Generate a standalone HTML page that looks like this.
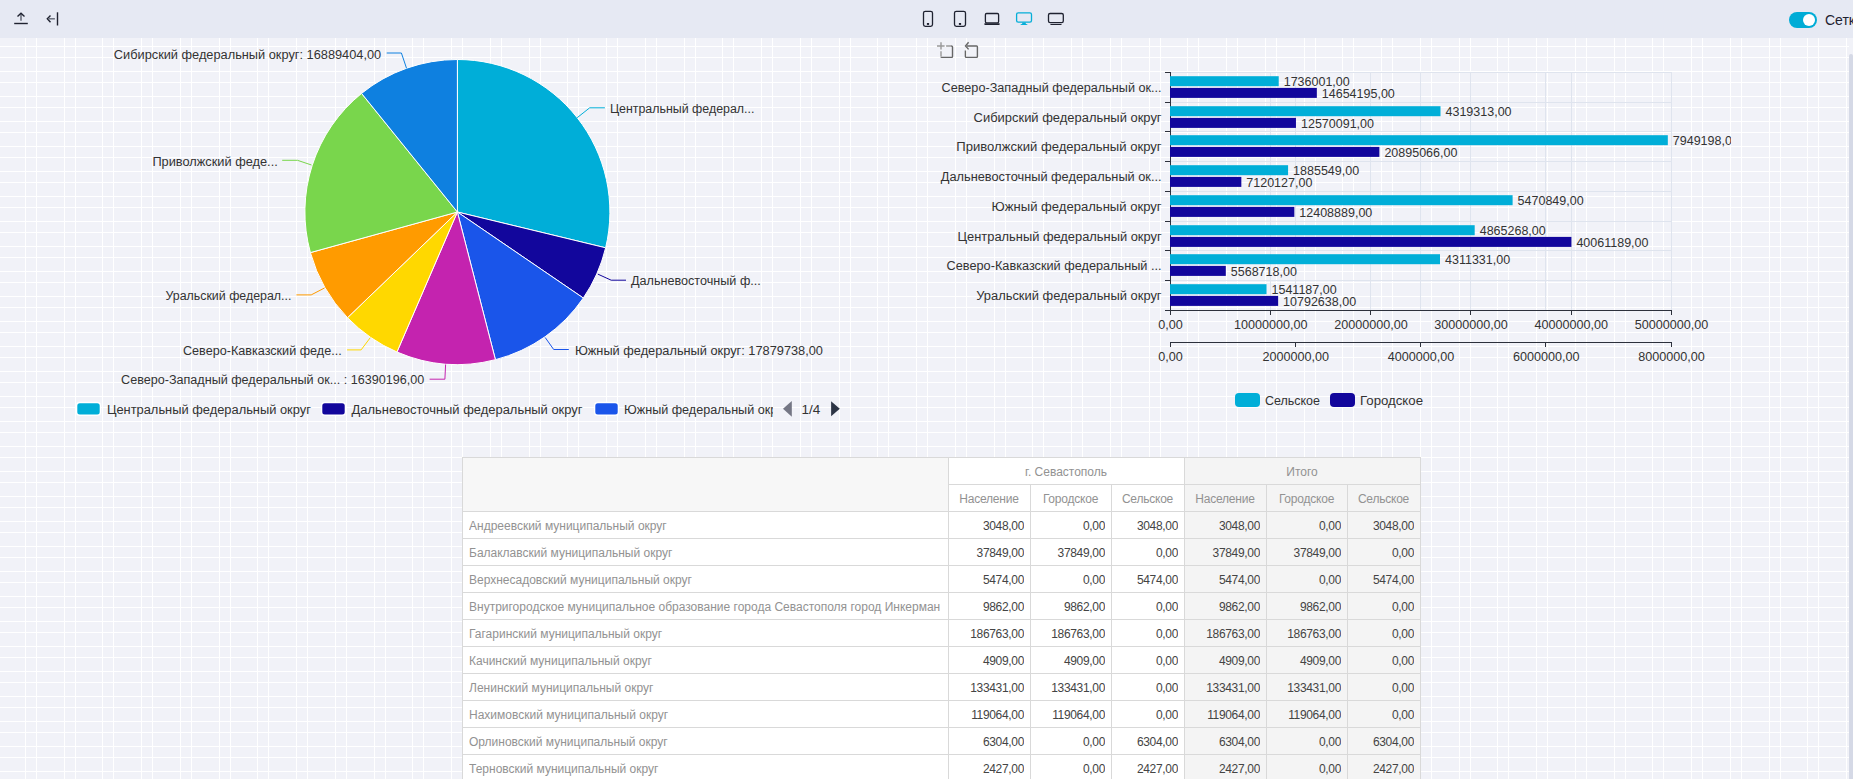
<!DOCTYPE html>
<html><head><meta charset="utf-8"><style>
html,body{margin:0;padding:0;}
body{width:1853px;height:779px;overflow:hidden;position:relative;background:#f1f2f8;font-family:'Liberation Sans', sans-serif;}
.abs{position:absolute;}
.cell{font-size:12px;white-space:nowrap;overflow:hidden;box-sizing:border-box;}
</style></head><body>
<svg class="abs" width="1853" height="779" style="left:0;top:0"><g fill="#ffffff"><rect x="25" y="38" width="1" height="741"/><rect x="36" y="38" width="1" height="741"/><rect x="64" y="38" width="1" height="741"/><rect x="75" y="38" width="1" height="741"/><rect x="102" y="38" width="1" height="741"/><rect x="113" y="38" width="1" height="741"/><rect x="141" y="38" width="1" height="741"/><rect x="152" y="38" width="1" height="741"/><rect x="180" y="38" width="1" height="741"/><rect x="191" y="38" width="1" height="741"/><rect x="219" y="38" width="1" height="741"/><rect x="230" y="38" width="1" height="741"/><rect x="257" y="38" width="1" height="741"/><rect x="268" y="38" width="1" height="741"/><rect x="296" y="38" width="1" height="741"/><rect x="307" y="38" width="1" height="741"/><rect x="335" y="38" width="1" height="741"/><rect x="346" y="38" width="1" height="741"/><rect x="374" y="38" width="1" height="741"/><rect x="385" y="38" width="1" height="741"/><rect x="412" y="38" width="1" height="741"/><rect x="423" y="38" width="1" height="741"/><rect x="451" y="38" width="1" height="741"/><rect x="462" y="38" width="1" height="741"/><rect x="490" y="38" width="1" height="741"/><rect x="501" y="38" width="1" height="741"/><rect x="529" y="38" width="1" height="741"/><rect x="540" y="38" width="1" height="741"/><rect x="567" y="38" width="1" height="741"/><rect x="578" y="38" width="1" height="741"/><rect x="606" y="38" width="1" height="741"/><rect x="617" y="38" width="1" height="741"/><rect x="645" y="38" width="1" height="741"/><rect x="656" y="38" width="1" height="741"/><rect x="684" y="38" width="1" height="741"/><rect x="695" y="38" width="1" height="741"/><rect x="722" y="38" width="1" height="741"/><rect x="733" y="38" width="1" height="741"/><rect x="761" y="38" width="1" height="741"/><rect x="772" y="38" width="1" height="741"/><rect x="800" y="38" width="1" height="741"/><rect x="811" y="38" width="1" height="741"/><rect x="839" y="38" width="1" height="741"/><rect x="850" y="38" width="1" height="741"/><rect x="877" y="38" width="1" height="741"/><rect x="888" y="38" width="1" height="741"/><rect x="916" y="38" width="1" height="741"/><rect x="927" y="38" width="1" height="741"/><rect x="955" y="38" width="1" height="741"/><rect x="966" y="38" width="1" height="741"/><rect x="994" y="38" width="1" height="741"/><rect x="1005" y="38" width="1" height="741"/><rect x="1032" y="38" width="1" height="741"/><rect x="1043" y="38" width="1" height="741"/><rect x="1071" y="38" width="1" height="741"/><rect x="1082" y="38" width="1" height="741"/><rect x="1110" y="38" width="1" height="741"/><rect x="1121" y="38" width="1" height="741"/><rect x="1149" y="38" width="1" height="741"/><rect x="1160" y="38" width="1" height="741"/><rect x="1187" y="38" width="1" height="741"/><rect x="1198" y="38" width="1" height="741"/><rect x="1226" y="38" width="1" height="741"/><rect x="1237" y="38" width="1" height="741"/><rect x="1265" y="38" width="1" height="741"/><rect x="1276" y="38" width="1" height="741"/><rect x="1304" y="38" width="1" height="741"/><rect x="1315" y="38" width="1" height="741"/><rect x="1342" y="38" width="1" height="741"/><rect x="1353" y="38" width="1" height="741"/><rect x="1381" y="38" width="1" height="741"/><rect x="1392" y="38" width="1" height="741"/><rect x="1420" y="38" width="1" height="741"/><rect x="1431" y="38" width="1" height="741"/><rect x="1459" y="38" width="1" height="741"/><rect x="1470" y="38" width="1" height="741"/><rect x="1497" y="38" width="1" height="741"/><rect x="1508" y="38" width="1" height="741"/><rect x="1536" y="38" width="1" height="741"/><rect x="1547" y="38" width="1" height="741"/><rect x="1575" y="38" width="1" height="741"/><rect x="1586" y="38" width="1" height="741"/><rect x="1614" y="38" width="1" height="741"/><rect x="1625" y="38" width="1" height="741"/><rect x="1652" y="38" width="1" height="741"/><rect x="1663" y="38" width="1" height="741"/><rect x="1691" y="38" width="1" height="741"/><rect x="1702" y="38" width="1" height="741"/><rect x="1730" y="38" width="1" height="741"/><rect x="1741" y="38" width="1" height="741"/><rect x="1769" y="38" width="1" height="741"/><rect x="1780" y="38" width="1" height="741"/><rect x="1807" y="38" width="1" height="741"/><rect x="1818" y="38" width="1" height="741"/><rect x="1846" y="38" width="1" height="741"/><rect x="0" y="46" width="1849" height="1"/><rect x="0" y="71" width="1849" height="1"/><rect x="0" y="96" width="1849" height="1"/><rect x="0" y="121" width="1849" height="1"/><rect x="0" y="146" width="1849" height="1"/><rect x="0" y="171" width="1849" height="1"/><rect x="0" y="196" width="1849" height="1"/><rect x="0" y="221" width="1849" height="1"/><rect x="0" y="246" width="1849" height="1"/><rect x="0" y="271" width="1849" height="1"/><rect x="0" y="296" width="1849" height="1"/><rect x="0" y="321" width="1849" height="1"/><rect x="0" y="346" width="1849" height="1"/><rect x="0" y="371" width="1849" height="1"/><rect x="0" y="396" width="1849" height="1"/><rect x="0" y="421" width="1849" height="1"/><rect x="0" y="446" width="1849" height="1"/><rect x="0" y="471" width="1849" height="1"/><rect x="0" y="496" width="1849" height="1"/><rect x="0" y="521" width="1849" height="1"/><rect x="0" y="546" width="1849" height="1"/><rect x="0" y="571" width="1849" height="1"/><rect x="0" y="596" width="1849" height="1"/><rect x="0" y="621" width="1849" height="1"/><rect x="0" y="646" width="1849" height="1"/><rect x="0" y="671" width="1849" height="1"/><rect x="0" y="696" width="1849" height="1"/><rect x="0" y="721" width="1849" height="1"/><rect x="0" y="746" width="1849" height="1"/><rect x="0" y="771" width="1849" height="1"/><rect x="0" y="57" width="1849" height="1"/><rect x="0" y="82" width="1849" height="1"/><rect x="0" y="107" width="1849" height="1"/><rect x="0" y="132" width="1849" height="1"/><rect x="0" y="157" width="1849" height="1"/><rect x="0" y="182" width="1849" height="1"/><rect x="0" y="207" width="1849" height="1"/><rect x="0" y="232" width="1849" height="1"/><rect x="0" y="257" width="1849" height="1"/><rect x="0" y="282" width="1849" height="1"/><rect x="0" y="307" width="1849" height="1"/><rect x="0" y="332" width="1849" height="1"/><rect x="0" y="357" width="1849" height="1"/><rect x="0" y="382" width="1849" height="1"/><rect x="0" y="407" width="1849" height="1"/><rect x="0" y="432" width="1849" height="1"/><rect x="0" y="457" width="1849" height="1"/><rect x="0" y="482" width="1849" height="1"/><rect x="0" y="507" width="1849" height="1"/><rect x="0" y="532" width="1849" height="1"/><rect x="0" y="557" width="1849" height="1"/><rect x="0" y="582" width="1849" height="1"/><rect x="0" y="607" width="1849" height="1"/><rect x="0" y="632" width="1849" height="1"/><rect x="0" y="657" width="1849" height="1"/><rect x="0" y="682" width="1849" height="1"/><rect x="0" y="707" width="1849" height="1"/><rect x="0" y="732" width="1849" height="1"/><rect x="0" y="757" width="1849" height="1"/></g></svg>
<div class="abs" style="left:0;top:0;width:1853px;height:38px;background:#e6e9f3"></div><svg class="abs" width="1853" height="38" style="left:0;top:0" fill="none" stroke="#1f2230"><path d="M14.2,23.5 H27.8" stroke-width="1.4"/><path d="M21,13.5 V20.7" stroke-width="1.6" stroke="#6b6f7c"/><path d="M17.5,16.5 L21,13.2 L24.5,16.5" stroke-width="1.4"/><path d="M57.5,12.3 V25.5" stroke-width="1.4"/><path d="M50.5,15.5 L47.3,18.8 L50.5,22.2" stroke-width="1.4"/><path d="M48.5,18.8 H54.9" stroke-width="1.5" stroke="#6b6f7c"/><rect x="923.5" y="11.3" width="9" height="15" rx="1.8" stroke-width="1.3"/><rect x="926.9" y="23" width="2.2" height="1.9" fill="#1f2230" stroke="none"/><rect x="954.5" y="11.3" width="11" height="15" rx="1.8" stroke-width="1.3"/><rect x="958.9" y="23" width="2.2" height="1.9" fill="#1f2230" stroke="none"/><rect x="985.4" y="13.5" width="13.2" height="9.3" rx="1.2" stroke-width="1.3"/><rect x="984.2" y="23.3" width="15.6" height="1.6" rx="0.8" fill="#1f2230" stroke="none"/><rect x="1016.6" y="12.8" width="14.9" height="9.3" rx="1.6" stroke="#05aed8" stroke-width="1.3"/><path d="M1022.2,22.4 H1025.8 V23.9 L1027.2,24.2 Q1027.9,25.1 1027,25.1 H1021 Q1020.1,25.1 1020.8,24.2 L1022.2,23.9 Z" fill="#05aed8" stroke="none"/><rect x="1048.5" y="13.5" width="14.8" height="9.2" rx="1.6" stroke-width="1.3"/><rect x="1050.3" y="24" width="11.3" height="1.1" rx="0.5" fill="#1f2230" stroke="none"/></svg><div class="abs" style="left:1789px;top:12px;width:28px;height:16px;border-radius:8px;background:#00acd6"></div><div class="abs" style="left:1802.5px;top:13.7px;width:12.6px;height:12.6px;border-radius:50%;background:#fff"></div><div class="abs" style="left:1825px;top:11px;height:18px;line-height:18px;font-size:14px;color:#1f2230;white-space:nowrap">Сетка</div>
<svg class="abs" width="1853" height="779" style="left:0;top:0;font-family:'Liberation Sans', sans-serif;font-size:12px" fill="#333333"><path d="M457.4,212.0 L457.40,59.50 A152.5,152.5 0 0 1 605.64,247.80 Z" fill="#00aed8" stroke="#fff" stroke-width="1" stroke-linejoin="round"/><path d="M457.4,212.0 L605.64,247.80 A152.5,152.5 0 0 1 583.32,298.02 Z" fill="#12069c" stroke="#fff" stroke-width="1" stroke-linejoin="round"/><path d="M457.4,212.0 L583.32,298.02 A152.5,152.5 0 0 1 495.43,359.68 Z" fill="#1a55ea" stroke="#fff" stroke-width="1" stroke-linejoin="round"/><path d="M457.4,212.0 L495.43,359.68 A152.5,152.5 0 0 1 396.96,352.01 Z" fill="#c423af" stroke="#fff" stroke-width="1" stroke-linejoin="round"/><path d="M457.4,212.0 L396.96,352.01 A152.5,152.5 0 0 1 347.47,317.69 Z" fill="#ffd800" stroke="#fff" stroke-width="1" stroke-linejoin="round"/><path d="M457.4,212.0 L347.47,317.69 A152.5,152.5 0 0 1 310.40,252.60 Z" fill="#ff9b00" stroke="#fff" stroke-width="1" stroke-linejoin="round"/><path d="M457.4,212.0 L310.40,252.60 A152.5,152.5 0 0 1 361.56,93.38 Z" fill="#79d64c" stroke="#fff" stroke-width="1" stroke-linejoin="round"/><path d="M457.4,212.0 L361.56,93.38 A152.5,152.5 0 0 1 457.40,59.50 Z" fill="#0e80e0" stroke="#fff" stroke-width="1" stroke-linejoin="round"/><polyline points="406.5,68.2 401.4,53 386.7,53" fill="none" stroke="#0e80e0" stroke-width="1"/><text x="381.2" y="54.5" text-anchor="end" dominant-baseline="central" textLength="267.4" lengthAdjust="spacingAndGlyphs">Сибирский федеральный округ: 16889404,00</text><polyline points="577.2,117.7 589.7,107.8 604.9,107.8" fill="none" stroke="#00aed8" stroke-width="1"/><text x="609.9" y="108.5" text-anchor="start" dominant-baseline="central" textLength="144.5" lengthAdjust="spacingAndGlyphs">Центральный федерал...</text><polyline points="597.8,274.1 611.2,280.2 626,280.2" fill="none" stroke="#12069c" stroke-width="1"/><text x="631" y="281" text-anchor="start" dominant-baseline="central" textLength="129.8" lengthAdjust="spacingAndGlyphs">Дальневосточный ф...</text><polyline points="545.2,337.5 553.7,349.5 568.8,349.5" fill="none" stroke="#1a55ea" stroke-width="1"/><text x="574.9" y="350.5" text-anchor="start" dominant-baseline="central" textLength="248.1" lengthAdjust="spacingAndGlyphs">Южный федеральный округ: 17879738,00</text><polyline points="445.6,364.5 444.9,379.2 429.6,379.2" fill="none" stroke="#c423af" stroke-width="1"/><text x="424.2" y="379.5" text-anchor="end" dominant-baseline="central" textLength="303.1" lengthAdjust="spacingAndGlyphs">Северо-Западный федеральный ок... : 16390196,00</text><polyline points="370.2,337.8 361.1,349.9 347.1,349.9" fill="none" stroke="#ffd800" stroke-width="1"/><text x="341.7" y="350.5" text-anchor="end" dominant-baseline="central" textLength="158.7" lengthAdjust="spacingAndGlyphs">Северо-Кавказский феде...</text><polyline points="324.5,288 311.2,294.9 296.4,294.9" fill="none" stroke="#ff9b00" stroke-width="1"/><text x="291.4" y="295.5" text-anchor="end" dominant-baseline="central" textLength="125.9" lengthAdjust="spacingAndGlyphs">Уральский федерал...</text><polyline points="311.5,165 297.5,160.3 282.2,160.3" fill="none" stroke="#79d64c" stroke-width="1"/><text x="277.8" y="162" text-anchor="end" dominant-baseline="central" textLength="125.4" lengthAdjust="spacingAndGlyphs">Приволжский феде...</text><rect x="76.6" y="402.5" width="23.8" height="12.8" rx="3.2" fill="#00aed8" stroke="#fff" stroke-width="1.4"/><rect x="321.6" y="402.5" width="23.8" height="12.8" rx="3.2" fill="#12069c" stroke="#fff" stroke-width="1.4"/><rect x="594.6" y="402.5" width="23.8" height="12.8" rx="3.2" fill="#1a55ea" stroke="#fff" stroke-width="1.4"/><defs><clipPath id="lc"><rect x="0" y="390" width="773" height="40"/></clipPath></defs><g clip-path="url(#lc)"><text x="106.9" y="409.5" dominant-baseline="central" textLength="204" lengthAdjust="spacingAndGlyphs">Центральный федеральный округ</text><text x="351.5" y="409.5" dominant-baseline="central" textLength="231" lengthAdjust="spacingAndGlyphs">Дальневосточный федеральный округ</text><text x="624" y="409.5" dominant-baseline="central" textLength="164" lengthAdjust="spacingAndGlyphs">Южный федеральный округ</text></g><path d="M791.8,401 L783,408.8 L791.8,416.8 Z" fill="#747684"/><text x="811" y="409.5" text-anchor="middle" dominant-baseline="central" font-size="13.5">1/4</text><path d="M831.1,401.3 L839.8,408.8 L831.1,416.2 Z" fill="#2d3545"/></svg>
<svg class="abs" width="1853" height="779" style="left:0;top:0;font-family:'Liberation Sans', sans-serif;font-size:12px" fill="#333333"><g fill="#dfe4ee"><rect x="1170" y="72" width="502" height="1"/><rect x="1170" y="102" width="502" height="1"/><rect x="1170" y="131" width="502" height="1"/><rect x="1170" y="161" width="502" height="1"/><rect x="1170" y="191" width="502" height="1"/><rect x="1170" y="221" width="502" height="1"/><rect x="1170" y="250" width="502" height="1"/><rect x="1170" y="280" width="502" height="1"/><rect x="1170" y="310" width="502" height="1"/><rect x="1270" y="72" width="1" height="238"/><rect x="1370" y="72" width="1" height="238"/><rect x="1470" y="72" width="1" height="238"/><rect x="1571" y="72" width="1" height="238"/><rect x="1671" y="72" width="1" height="238"/><rect x="1295" y="72" width="1" height="238"/><rect x="1420" y="72" width="1" height="238"/><rect x="1545" y="72" width="1" height="238"/></g><g fill="#2d313c"><rect x="1170" y="72" width="1" height="239"/><rect x="1165" y="72" width="5" height="1"/><rect x="1165" y="102" width="5" height="1"/><rect x="1165" y="131" width="5" height="1"/><rect x="1165" y="161" width="5" height="1"/><rect x="1165" y="191" width="5" height="1"/><rect x="1165" y="221" width="5" height="1"/><rect x="1165" y="250" width="5" height="1"/><rect x="1165" y="280" width="5" height="1"/><rect x="1165" y="310" width="5" height="1"/><rect x="1165" y="310" width="507" height="1"/><rect x="1170" y="310" width="1" height="5"/><rect x="1270" y="310" width="1" height="5"/><rect x="1370" y="310" width="1" height="5"/><rect x="1470" y="310" width="1" height="5"/><rect x="1571" y="310" width="1" height="5"/><rect x="1671" y="310" width="1" height="5"/><rect x="1170" y="342" width="502" height="1"/><rect x="1170" y="342" width="1" height="5"/><rect x="1295" y="342" width="1" height="5"/><rect x="1420" y="342" width="1" height="5"/><rect x="1545" y="342" width="1" height="5"/><rect x="1671" y="342" width="1" height="5"/></g><rect x="1170" y="76.20" width="108.72" height="10" fill="#00aed8"/><rect x="1170" y="87.90" width="146.84" height="10" fill="#12069c"/><text x="1161.6" y="88.09" text-anchor="end" dominant-baseline="central" textLength="220" lengthAdjust="spacingAndGlyphs">Северо-Западный федеральный ок...</text><rect x="1170" y="106.20" width="270.50" height="10" fill="#00aed8"/><rect x="1170" y="117.90" width="125.95" height="10" fill="#12069c"/><text x="1161.6" y="118.09" text-anchor="end" dominant-baseline="central" textLength="188" lengthAdjust="spacingAndGlyphs">Сибирский федеральный округ</text><rect x="1170" y="135.20" width="497.82" height="10" fill="#00aed8"/><rect x="1170" y="146.90" width="209.37" height="10" fill="#12069c"/><text x="1161.6" y="147.09" text-anchor="end" dominant-baseline="central" textLength="205.3" lengthAdjust="spacingAndGlyphs">Приволжский федеральный округ</text><rect x="1170" y="165.20" width="118.08" height="10" fill="#00aed8"/><rect x="1170" y="176.90" width="71.34" height="10" fill="#12069c"/><text x="1161.6" y="177.09" text-anchor="end" dominant-baseline="central" textLength="220.8" lengthAdjust="spacingAndGlyphs">Дальневосточный федеральный ок...</text><rect x="1170" y="195.20" width="342.61" height="10" fill="#00aed8"/><rect x="1170" y="206.90" width="124.34" height="10" fill="#12069c"/><text x="1161.6" y="207.09" text-anchor="end" dominant-baseline="central" textLength="170" lengthAdjust="spacingAndGlyphs">Южный федеральный округ</text><rect x="1170" y="225.20" width="304.69" height="10" fill="#00aed8"/><rect x="1170" y="236.90" width="401.41" height="10" fill="#12069c"/><text x="1161.6" y="237.09" text-anchor="end" dominant-baseline="central" textLength="204" lengthAdjust="spacingAndGlyphs">Центральный федеральный округ</text><rect x="1170" y="254.20" width="270.00" height="10" fill="#00aed8"/><rect x="1170" y="265.90" width="55.80" height="10" fill="#12069c"/><text x="1161.6" y="266.09" text-anchor="end" dominant-baseline="central" textLength="215" lengthAdjust="spacingAndGlyphs">Северо-Кавказский федеральный ...</text><rect x="1170" y="284.20" width="96.52" height="10" fill="#00aed8"/><rect x="1170" y="295.90" width="108.14" height="10" fill="#12069c"/><text x="1161.6" y="296.09" text-anchor="end" dominant-baseline="central" textLength="185.4" lengthAdjust="spacingAndGlyphs">Уральский федеральный округ</text><defs><clipPath id="bc"><rect x="900" y="40" width="831" height="380"/></clipPath></defs><g clip-path="url(#bc)"><text x="1283.7" y="82.20" dominant-baseline="central" font-size="12.5">1736001,00</text><text x="1321.8" y="94.20" dominant-baseline="central" font-size="12.5">14654195,00</text><text x="1445.5" y="112.20" dominant-baseline="central" font-size="12.5">4319313,00</text><text x="1301.0" y="124.20" dominant-baseline="central" font-size="12.5">12570091,00</text><text x="1672.8" y="141.20" dominant-baseline="central" font-size="12.5">7949198,00</text><text x="1384.4" y="153.20" dominant-baseline="central" font-size="12.5">20895066,00</text><text x="1293.1" y="171.20" dominant-baseline="central" font-size="12.5">1885549,00</text><text x="1246.3" y="183.20" dominant-baseline="central" font-size="12.5">7120127,00</text><text x="1517.6" y="201.20" dominant-baseline="central" font-size="12.5">5470849,00</text><text x="1299.3" y="213.20" dominant-baseline="central" font-size="12.5">12408889,00</text><text x="1479.7" y="231.20" dominant-baseline="central" font-size="12.5">4865268,00</text><text x="1576.4" y="243.20" dominant-baseline="central" font-size="12.5">40061189,00</text><text x="1445.0" y="260.20" dominant-baseline="central" font-size="12.5">4311331,00</text><text x="1230.8" y="272.20" dominant-baseline="central" font-size="12.5">5568718,00</text><text x="1271.5" y="290.20" dominant-baseline="central" font-size="12.5">1541187,00</text><text x="1283.1" y="302.20" dominant-baseline="central" font-size="12.5">10792638,00</text></g><text x="1170.5" y="324.5" text-anchor="middle" dominant-baseline="central" font-size="12.6">0,00</text><text x="1270.7" y="324.5" text-anchor="middle" dominant-baseline="central" font-size="12.6">10000000,00</text><text x="1370.9" y="324.5" text-anchor="middle" dominant-baseline="central" font-size="12.6">20000000,00</text><text x="1471.1" y="324.5" text-anchor="middle" dominant-baseline="central" font-size="12.6">30000000,00</text><text x="1571.3" y="324.5" text-anchor="middle" dominant-baseline="central" font-size="12.6">40000000,00</text><text x="1671.5" y="324.5" text-anchor="middle" dominant-baseline="central" font-size="12.6">50000000,00</text><text x="1170.5" y="356.5" text-anchor="middle" dominant-baseline="central" font-size="12.6">0,00</text><text x="1295.8" y="356.5" text-anchor="middle" dominant-baseline="central" font-size="12.6">2000000,00</text><text x="1421.0" y="356.5" text-anchor="middle" dominant-baseline="central" font-size="12.6">4000000,00</text><text x="1546.2" y="356.5" text-anchor="middle" dominant-baseline="central" font-size="12.6">6000000,00</text><text x="1671.5" y="356.5" text-anchor="middle" dominant-baseline="central" font-size="12.6">8000000,00</text><rect x="1235" y="393" width="25" height="14" rx="4" fill="#00aed8"/><text x="1265" y="400.5" dominant-baseline="central" textLength="55" lengthAdjust="spacingAndGlyphs">Сельское</text><rect x="1330" y="393" width="25" height="14" rx="4" fill="#12069c"/><text x="1360" y="400.5" dominant-baseline="central" textLength="63" lengthAdjust="spacingAndGlyphs">Городское</text><g fill="none" stroke-width="1.4"><path d="M941,42.2 V49.6 M941,51.2 V56" stroke="#999"/><path d="M937,46 H944.6 M946.1,46 H951" stroke="#999"/><path d="M951,46 Q952.5,46 952.5,46.8 V56.6 Q952.5,57.4 951.7,57.4 H941.8 Q941,57.4 941,56.6" stroke="#666"/><path d="M967,46 H976.6 Q977.4,46 977.4,46.8 V56.6 Q977.4,57.4 976.6,57.4 H966.2 Q965.4,57.4 965.4,56.6 V50.6" stroke="#666"/><path d="M968.6,42.2 L965.5,46 L968.6,49.4" stroke="#666"/></g></svg>
<div class="abs" style="left:462px;top:457px;width:486px;height:54px;background:#f7f7f7"></div><div class="abs" style="left:948px;top:457px;width:236px;height:54px;background:#ffffff"></div><div class="abs" style="left:1184px;top:457px;width:236px;height:322px;background:#f4f4f4"></div><div class="abs" style="left:462px;top:511px;width:722px;height:268px;background:#ffffff"></div><svg class="abs" width="1853" height="779" style="left:0;top:0"><g fill="#d9d9d9"><rect x="462" y="457" width="959" height="1"/><rect x="948" y="484" width="472" height="1"/><rect x="462" y="511" width="959" height="1"/><rect x="462" y="538" width="959" height="1"/><rect x="462" y="565" width="959" height="1"/><rect x="462" y="592" width="959" height="1"/><rect x="462" y="619" width="959" height="1"/><rect x="462" y="646" width="959" height="1"/><rect x="462" y="673" width="959" height="1"/><rect x="462" y="700" width="959" height="1"/><rect x="462" y="727" width="959" height="1"/><rect x="462" y="754" width="959" height="1"/><rect x="462" y="457" width="1" height="322"/><rect x="948" y="457" width="1" height="322"/><rect x="1030" y="484" width="1" height="295"/><rect x="1111" y="484" width="1" height="295"/><rect x="1184" y="457" width="1" height="322"/><rect x="1266" y="484" width="1" height="295"/><rect x="1347" y="484" width="1" height="295"/><rect x="1420" y="457" width="1" height="322"/></g></svg><div class="abs cell" style="left:948px;top:459px;width:236px;height:27px;line-height:27px;text-align:center;color:#929292;">г. Севастополь</div><div class="abs cell" style="left:1184px;top:459px;width:236px;height:27px;line-height:27px;text-align:center;color:#929292;">Итого</div><div class="abs cell" style="left:948px;top:486px;width:82px;height:27px;line-height:27px;text-align:center;color:#929292;letter-spacing:-0.22px;">Население</div><div class="abs cell" style="left:1030px;top:486px;width:81px;height:27px;line-height:27px;text-align:center;color:#929292;letter-spacing:-0.22px;">Городское</div><div class="abs cell" style="left:1111px;top:486px;width:73px;height:27px;line-height:27px;text-align:center;color:#929292;letter-spacing:-0.22px;">Сельское</div><div class="abs cell" style="left:1184px;top:486px;width:82px;height:27px;line-height:27px;text-align:center;color:#929292;letter-spacing:-0.22px;">Население</div><div class="abs cell" style="left:1266px;top:486px;width:81px;height:27px;line-height:27px;text-align:center;color:#929292;letter-spacing:-0.22px;">Городское</div><div class="abs cell" style="left:1347px;top:486px;width:73px;height:27px;line-height:27px;text-align:center;color:#929292;letter-spacing:-0.22px;">Сельское</div><div class="abs cell" style="left:469px;top:513px;width:479px;height:27px;line-height:27px;text-align:left;color:#929292;">Андреевский муниципальный округ</div><div class="abs cell" style="left:948px;top:513px;width:76px;height:27px;line-height:27px;text-align:right;color:#444444;letter-spacing:-0.33px;">3048,00</div><div class="abs cell" style="left:1030px;top:513px;width:75px;height:27px;line-height:27px;text-align:right;color:#444444;letter-spacing:-0.33px;">0,00</div><div class="abs cell" style="left:1111px;top:513px;width:67px;height:27px;line-height:27px;text-align:right;color:#444444;letter-spacing:-0.33px;">3048,00</div><div class="abs cell" style="left:1184px;top:513px;width:76px;height:27px;line-height:27px;text-align:right;color:#444444;letter-spacing:-0.33px;">3048,00</div><div class="abs cell" style="left:1266px;top:513px;width:75px;height:27px;line-height:27px;text-align:right;color:#444444;letter-spacing:-0.33px;">0,00</div><div class="abs cell" style="left:1347px;top:513px;width:67px;height:27px;line-height:27px;text-align:right;color:#444444;letter-spacing:-0.33px;">3048,00</div><div class="abs cell" style="left:469px;top:540px;width:479px;height:27px;line-height:27px;text-align:left;color:#929292;">Балаклавский муниципальный округ</div><div class="abs cell" style="left:948px;top:540px;width:76px;height:27px;line-height:27px;text-align:right;color:#444444;letter-spacing:-0.33px;">37849,00</div><div class="abs cell" style="left:1030px;top:540px;width:75px;height:27px;line-height:27px;text-align:right;color:#444444;letter-spacing:-0.33px;">37849,00</div><div class="abs cell" style="left:1111px;top:540px;width:67px;height:27px;line-height:27px;text-align:right;color:#444444;letter-spacing:-0.33px;">0,00</div><div class="abs cell" style="left:1184px;top:540px;width:76px;height:27px;line-height:27px;text-align:right;color:#444444;letter-spacing:-0.33px;">37849,00</div><div class="abs cell" style="left:1266px;top:540px;width:75px;height:27px;line-height:27px;text-align:right;color:#444444;letter-spacing:-0.33px;">37849,00</div><div class="abs cell" style="left:1347px;top:540px;width:67px;height:27px;line-height:27px;text-align:right;color:#444444;letter-spacing:-0.33px;">0,00</div><div class="abs cell" style="left:469px;top:567px;width:479px;height:27px;line-height:27px;text-align:left;color:#929292;">Верхнесадовский муниципальный округ</div><div class="abs cell" style="left:948px;top:567px;width:76px;height:27px;line-height:27px;text-align:right;color:#444444;letter-spacing:-0.33px;">5474,00</div><div class="abs cell" style="left:1030px;top:567px;width:75px;height:27px;line-height:27px;text-align:right;color:#444444;letter-spacing:-0.33px;">0,00</div><div class="abs cell" style="left:1111px;top:567px;width:67px;height:27px;line-height:27px;text-align:right;color:#444444;letter-spacing:-0.33px;">5474,00</div><div class="abs cell" style="left:1184px;top:567px;width:76px;height:27px;line-height:27px;text-align:right;color:#444444;letter-spacing:-0.33px;">5474,00</div><div class="abs cell" style="left:1266px;top:567px;width:75px;height:27px;line-height:27px;text-align:right;color:#444444;letter-spacing:-0.33px;">0,00</div><div class="abs cell" style="left:1347px;top:567px;width:67px;height:27px;line-height:27px;text-align:right;color:#444444;letter-spacing:-0.33px;">5474,00</div><div class="abs cell" style="left:469px;top:594px;width:479px;height:27px;line-height:27px;text-align:left;color:#929292;">Внутригородское муниципальное образование города Севастополя город Инкерман</div><div class="abs cell" style="left:948px;top:594px;width:76px;height:27px;line-height:27px;text-align:right;color:#444444;letter-spacing:-0.33px;">9862,00</div><div class="abs cell" style="left:1030px;top:594px;width:75px;height:27px;line-height:27px;text-align:right;color:#444444;letter-spacing:-0.33px;">9862,00</div><div class="abs cell" style="left:1111px;top:594px;width:67px;height:27px;line-height:27px;text-align:right;color:#444444;letter-spacing:-0.33px;">0,00</div><div class="abs cell" style="left:1184px;top:594px;width:76px;height:27px;line-height:27px;text-align:right;color:#444444;letter-spacing:-0.33px;">9862,00</div><div class="abs cell" style="left:1266px;top:594px;width:75px;height:27px;line-height:27px;text-align:right;color:#444444;letter-spacing:-0.33px;">9862,00</div><div class="abs cell" style="left:1347px;top:594px;width:67px;height:27px;line-height:27px;text-align:right;color:#444444;letter-spacing:-0.33px;">0,00</div><div class="abs cell" style="left:469px;top:621px;width:479px;height:27px;line-height:27px;text-align:left;color:#929292;">Гагаринский муниципальный округ</div><div class="abs cell" style="left:948px;top:621px;width:76px;height:27px;line-height:27px;text-align:right;color:#444444;letter-spacing:-0.33px;">186763,00</div><div class="abs cell" style="left:1030px;top:621px;width:75px;height:27px;line-height:27px;text-align:right;color:#444444;letter-spacing:-0.33px;">186763,00</div><div class="abs cell" style="left:1111px;top:621px;width:67px;height:27px;line-height:27px;text-align:right;color:#444444;letter-spacing:-0.33px;">0,00</div><div class="abs cell" style="left:1184px;top:621px;width:76px;height:27px;line-height:27px;text-align:right;color:#444444;letter-spacing:-0.33px;">186763,00</div><div class="abs cell" style="left:1266px;top:621px;width:75px;height:27px;line-height:27px;text-align:right;color:#444444;letter-spacing:-0.33px;">186763,00</div><div class="abs cell" style="left:1347px;top:621px;width:67px;height:27px;line-height:27px;text-align:right;color:#444444;letter-spacing:-0.33px;">0,00</div><div class="abs cell" style="left:469px;top:648px;width:479px;height:27px;line-height:27px;text-align:left;color:#929292;">Качинский муниципальный округ</div><div class="abs cell" style="left:948px;top:648px;width:76px;height:27px;line-height:27px;text-align:right;color:#444444;letter-spacing:-0.33px;">4909,00</div><div class="abs cell" style="left:1030px;top:648px;width:75px;height:27px;line-height:27px;text-align:right;color:#444444;letter-spacing:-0.33px;">4909,00</div><div class="abs cell" style="left:1111px;top:648px;width:67px;height:27px;line-height:27px;text-align:right;color:#444444;letter-spacing:-0.33px;">0,00</div><div class="abs cell" style="left:1184px;top:648px;width:76px;height:27px;line-height:27px;text-align:right;color:#444444;letter-spacing:-0.33px;">4909,00</div><div class="abs cell" style="left:1266px;top:648px;width:75px;height:27px;line-height:27px;text-align:right;color:#444444;letter-spacing:-0.33px;">4909,00</div><div class="abs cell" style="left:1347px;top:648px;width:67px;height:27px;line-height:27px;text-align:right;color:#444444;letter-spacing:-0.33px;">0,00</div><div class="abs cell" style="left:469px;top:675px;width:479px;height:27px;line-height:27px;text-align:left;color:#929292;">Ленинский муниципальный округ</div><div class="abs cell" style="left:948px;top:675px;width:76px;height:27px;line-height:27px;text-align:right;color:#444444;letter-spacing:-0.33px;">133431,00</div><div class="abs cell" style="left:1030px;top:675px;width:75px;height:27px;line-height:27px;text-align:right;color:#444444;letter-spacing:-0.33px;">133431,00</div><div class="abs cell" style="left:1111px;top:675px;width:67px;height:27px;line-height:27px;text-align:right;color:#444444;letter-spacing:-0.33px;">0,00</div><div class="abs cell" style="left:1184px;top:675px;width:76px;height:27px;line-height:27px;text-align:right;color:#444444;letter-spacing:-0.33px;">133431,00</div><div class="abs cell" style="left:1266px;top:675px;width:75px;height:27px;line-height:27px;text-align:right;color:#444444;letter-spacing:-0.33px;">133431,00</div><div class="abs cell" style="left:1347px;top:675px;width:67px;height:27px;line-height:27px;text-align:right;color:#444444;letter-spacing:-0.33px;">0,00</div><div class="abs cell" style="left:469px;top:702px;width:479px;height:27px;line-height:27px;text-align:left;color:#929292;">Нахимовский муниципальный округ</div><div class="abs cell" style="left:948px;top:702px;width:76px;height:27px;line-height:27px;text-align:right;color:#444444;letter-spacing:-0.33px;">119064,00</div><div class="abs cell" style="left:1030px;top:702px;width:75px;height:27px;line-height:27px;text-align:right;color:#444444;letter-spacing:-0.33px;">119064,00</div><div class="abs cell" style="left:1111px;top:702px;width:67px;height:27px;line-height:27px;text-align:right;color:#444444;letter-spacing:-0.33px;">0,00</div><div class="abs cell" style="left:1184px;top:702px;width:76px;height:27px;line-height:27px;text-align:right;color:#444444;letter-spacing:-0.33px;">119064,00</div><div class="abs cell" style="left:1266px;top:702px;width:75px;height:27px;line-height:27px;text-align:right;color:#444444;letter-spacing:-0.33px;">119064,00</div><div class="abs cell" style="left:1347px;top:702px;width:67px;height:27px;line-height:27px;text-align:right;color:#444444;letter-spacing:-0.33px;">0,00</div><div class="abs cell" style="left:469px;top:729px;width:479px;height:27px;line-height:27px;text-align:left;color:#929292;">Орлиновский муниципальный округ</div><div class="abs cell" style="left:948px;top:729px;width:76px;height:27px;line-height:27px;text-align:right;color:#444444;letter-spacing:-0.33px;">6304,00</div><div class="abs cell" style="left:1030px;top:729px;width:75px;height:27px;line-height:27px;text-align:right;color:#444444;letter-spacing:-0.33px;">0,00</div><div class="abs cell" style="left:1111px;top:729px;width:67px;height:27px;line-height:27px;text-align:right;color:#444444;letter-spacing:-0.33px;">6304,00</div><div class="abs cell" style="left:1184px;top:729px;width:76px;height:27px;line-height:27px;text-align:right;color:#444444;letter-spacing:-0.33px;">6304,00</div><div class="abs cell" style="left:1266px;top:729px;width:75px;height:27px;line-height:27px;text-align:right;color:#444444;letter-spacing:-0.33px;">0,00</div><div class="abs cell" style="left:1347px;top:729px;width:67px;height:27px;line-height:27px;text-align:right;color:#444444;letter-spacing:-0.33px;">6304,00</div><div class="abs cell" style="left:469px;top:756px;width:479px;height:27px;line-height:27px;text-align:left;color:#929292;">Терновский муниципальный округ</div><div class="abs cell" style="left:948px;top:756px;width:76px;height:27px;line-height:27px;text-align:right;color:#444444;letter-spacing:-0.33px;">2427,00</div><div class="abs cell" style="left:1030px;top:756px;width:75px;height:27px;line-height:27px;text-align:right;color:#444444;letter-spacing:-0.33px;">0,00</div><div class="abs cell" style="left:1111px;top:756px;width:67px;height:27px;line-height:27px;text-align:right;color:#444444;letter-spacing:-0.33px;">2427,00</div><div class="abs cell" style="left:1184px;top:756px;width:76px;height:27px;line-height:27px;text-align:right;color:#444444;letter-spacing:-0.33px;">2427,00</div><div class="abs cell" style="left:1266px;top:756px;width:75px;height:27px;line-height:27px;text-align:right;color:#444444;letter-spacing:-0.33px;">0,00</div><div class="abs cell" style="left:1347px;top:756px;width:67px;height:27px;line-height:27px;text-align:right;color:#444444;letter-spacing:-0.33px;">2427,00</div>
<div class="abs" style="left:1849px;top:54px;width:4px;height:725px;border-radius:2px 2px 0 0;background:#d5d9e6"></div>
</body></html>
